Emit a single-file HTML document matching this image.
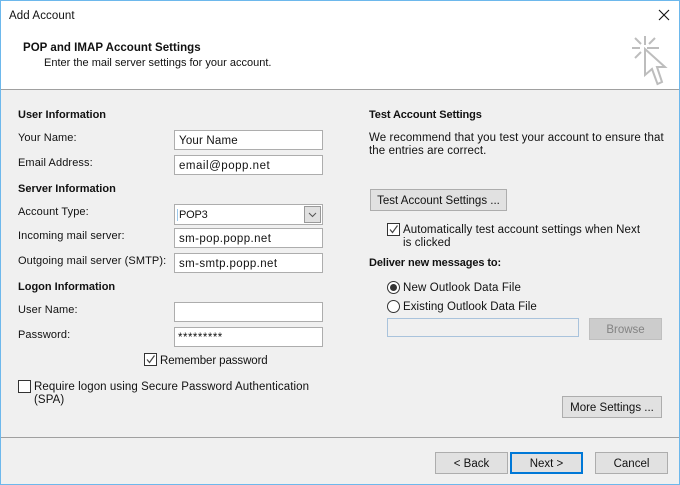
<!DOCTYPE html>
<html><head><meta charset="utf-8">
<style>
html,body{margin:0;padding:0}
body{width:680px;height:485px;position:relative;overflow:hidden;background:#f0f0f0;font-family:"Liberation Sans",sans-serif;font-size:11.5px;color:#111}
.t{position:absolute;white-space:nowrap;letter-spacing:.1px;line-height:14px;margin-top:1px}
.l{font-size:11px}
.b{font-weight:bold;font-size:11px;letter-spacing:-.1px}
.i{position:absolute;box-sizing:border-box;border:1px solid #adadad;background:#fff;height:20px;left:174px;width:149px;padding-left:4px;line-height:20px;font-size:11.5px;letter-spacing:.4px;white-space:nowrap}
.btn{position:absolute;box-sizing:border-box;border:1px solid #adadad;background:#e1e1e1;text-align:center;height:22px;line-height:22px;white-space:nowrap}
.c{position:absolute;box-sizing:border-box;width:13px;height:13px;border:1px solid #333;background:#fff}
.c svg{position:absolute;left:0;top:0}
.r{position:absolute;box-sizing:border-box;width:13px;height:13px;border:1px solid #333;border-radius:50%;background:#fff}
</style></head><body>
<div style="position:absolute;left:0;top:0;width:680px;height:89px;background:#fff"></div>
<div style="position:absolute;left:0;top:89px;width:680px;height:1px;background:#a0a0a0"></div>
<div style="position:absolute;left:0;top:437px;width:680px;height:1px;background:#a0a0a0"></div>
<div style="position:absolute;left:0;top:0;width:680px;height:485px;box-sizing:border-box;border:1px solid #6db8ec"></div>

<div class="t" style="left:9px;top:8px">Add Account</div>
<svg style="position:absolute;left:658px;top:9px" width="12" height="12"><path d="M1 1L11 11M11 1L1 11" stroke="#111" stroke-width="1.1" fill="none"/></svg>
<div class="t" style="left:23px;top:40px;font-weight:bold;letter-spacing:.03px">POP and IMAP Account Settings</div>
<div class="t l" style="left:44px;top:55px;letter-spacing:0">Enter the mail server settings for your account.</div>
<svg style="position:absolute;left:630px;top:34px" width="40" height="54" fill="none"><path d="M2 14H10M17 14H29M15 2V11M5 4L11 10M25 4L19 10M5 24L11 18" stroke="#bdbdbd" stroke-width="2"/><path d="M15 15V41L22 35L27.500 50L32 48L27 33H35Z" stroke="#bdbdbd" stroke-width="2" fill="#fff"/></svg>

<div class="t b" style="left:18px;top:107px;letter-spacing:0">User Information</div>
<div class="t l" style="left:18px;top:130px">Your Name:</div>
<div class="i" style="top:130px;letter-spacing:.2px">Your Name</div>
<div class="t l" style="left:18px;top:155px">Email Address:</div>
<div class="i" style="top:155px;letter-spacing:.52px">email@popp.net</div>
<div class="t b" style="left:18px;top:181px;letter-spacing:0">Server Information</div>
<div class="t l" style="left:18px;top:204px">Account Type:</div>
<div class="i" style="top:204px;height:21px;padding-left:2px;line-height:20px;letter-spacing:-.2px;font-size:11px"><span style="border-left:1px solid #9cc8ea;padding-left:1px">POP3</span>
<div style="position:absolute;right:1px;top:1px;width:17px;height:17px;box-sizing:border-box;border:1px solid #999;background:#e0e0e0"><svg width="15" height="15" style="position:absolute;left:0;top:0"><path d="M4 6L7.500 9.500L11 6" stroke="#555" fill="none"/></svg></div></div>
<div class="t l" style="left:18px;top:228px">Incoming mail server:</div>
<div class="i" style="top:228px">sm-pop.popp.net</div>
<div class="t l" style="left:18px;top:253px;letter-spacing:.1px">Outgoing mail server (SMTP):</div>
<div class="i" style="top:253px">sm-smtp.popp.net</div>
<div class="t b" style="left:18px;top:279px;letter-spacing:0">Logon Information</div>
<div class="t l" style="left:18px;top:302px">User Name:</div>
<div class="i" style="top:302px"></div>
<div class="t l" style="left:18px;top:327px">Password:</div>
<div class="i" style="top:327px;padding-left:3px;letter-spacing:.5px;line-height:21px">*********</div>
<div class="c" style="left:144px;top:353px"><svg width="11" height="11"><path d="M2 5.500L4.500 8.500L9.500 1.500" stroke="#444" stroke-width="1.200" fill="none"/></svg></div>
<div class="t" style="left:160px;top:353px;letter-spacing:-.1px">Remember password</div>
<div class="c" style="left:18px;top:380px"></div>
<div class="t" style="left:34px;top:379px;letter-spacing:.08px">Require logon using Secure Password Authentication</div>
<div class="t" style="left:34px;top:392px">(SPA)</div>

<div class="t b" style="left:369px;top:107px">Test Account Settings</div>
<div class="t" style="left:369px;top:130px">We recommend that you test your account to ensure that</div>
<div class="t" style="left:369px;top:143px">the entries are correct.</div>
<div class="btn" style="left:370px;top:189px;width:137px">Test Account Settings ...</div>
<div class="c" style="left:387px;top:223px"><svg width="11" height="11"><path d="M2 5.500L4.500 8.500L9.500 1.500" stroke="#444" stroke-width="1.200" fill="none"/></svg></div>
<div class="t" style="left:403px;top:222px;letter-spacing:.07px">Automatically test account settings when Next</div>
<div class="t" style="left:403px;top:235px">is clicked</div>
<div class="t b" style="left:369px;top:255px">Deliver new messages to:</div>
<div class="r" style="left:387px;top:281px"><div style="position:absolute;left:2px;top:2px;width:7px;height:7px;border-radius:50%;background:#333"></div></div>
<div class="t" style="left:403px;top:280px;letter-spacing:.14px">New Outlook Data File</div>
<div class="r" style="left:387px;top:300px"></div>
<div class="t" style="left:403px;top:299px;letter-spacing:.06px">Existing Outlook Data File</div>
<div style="position:absolute;left:387px;top:318px;width:192px;height:19px;box-sizing:border-box;border:1px solid #a9c3dc;background:#f0f0f0"></div>
<div class="btn" style="left:589px;top:318px;width:73px;background:#ccc;border-color:#bfbfbf;color:#838383">Browse</div>
<div class="btn" style="left:562px;top:396px;width:100px">More Settings ...</div>
<div class="btn" style="left:435px;top:452px;width:73px">&lt; Back</div>
<div class="btn" style="left:510px;top:452px;width:73px;border:2px solid #0078d7;line-height:20px">Next &gt;</div>
<div class="btn" style="left:595px;top:452px;width:73px">Cancel</div>
</body></html>
